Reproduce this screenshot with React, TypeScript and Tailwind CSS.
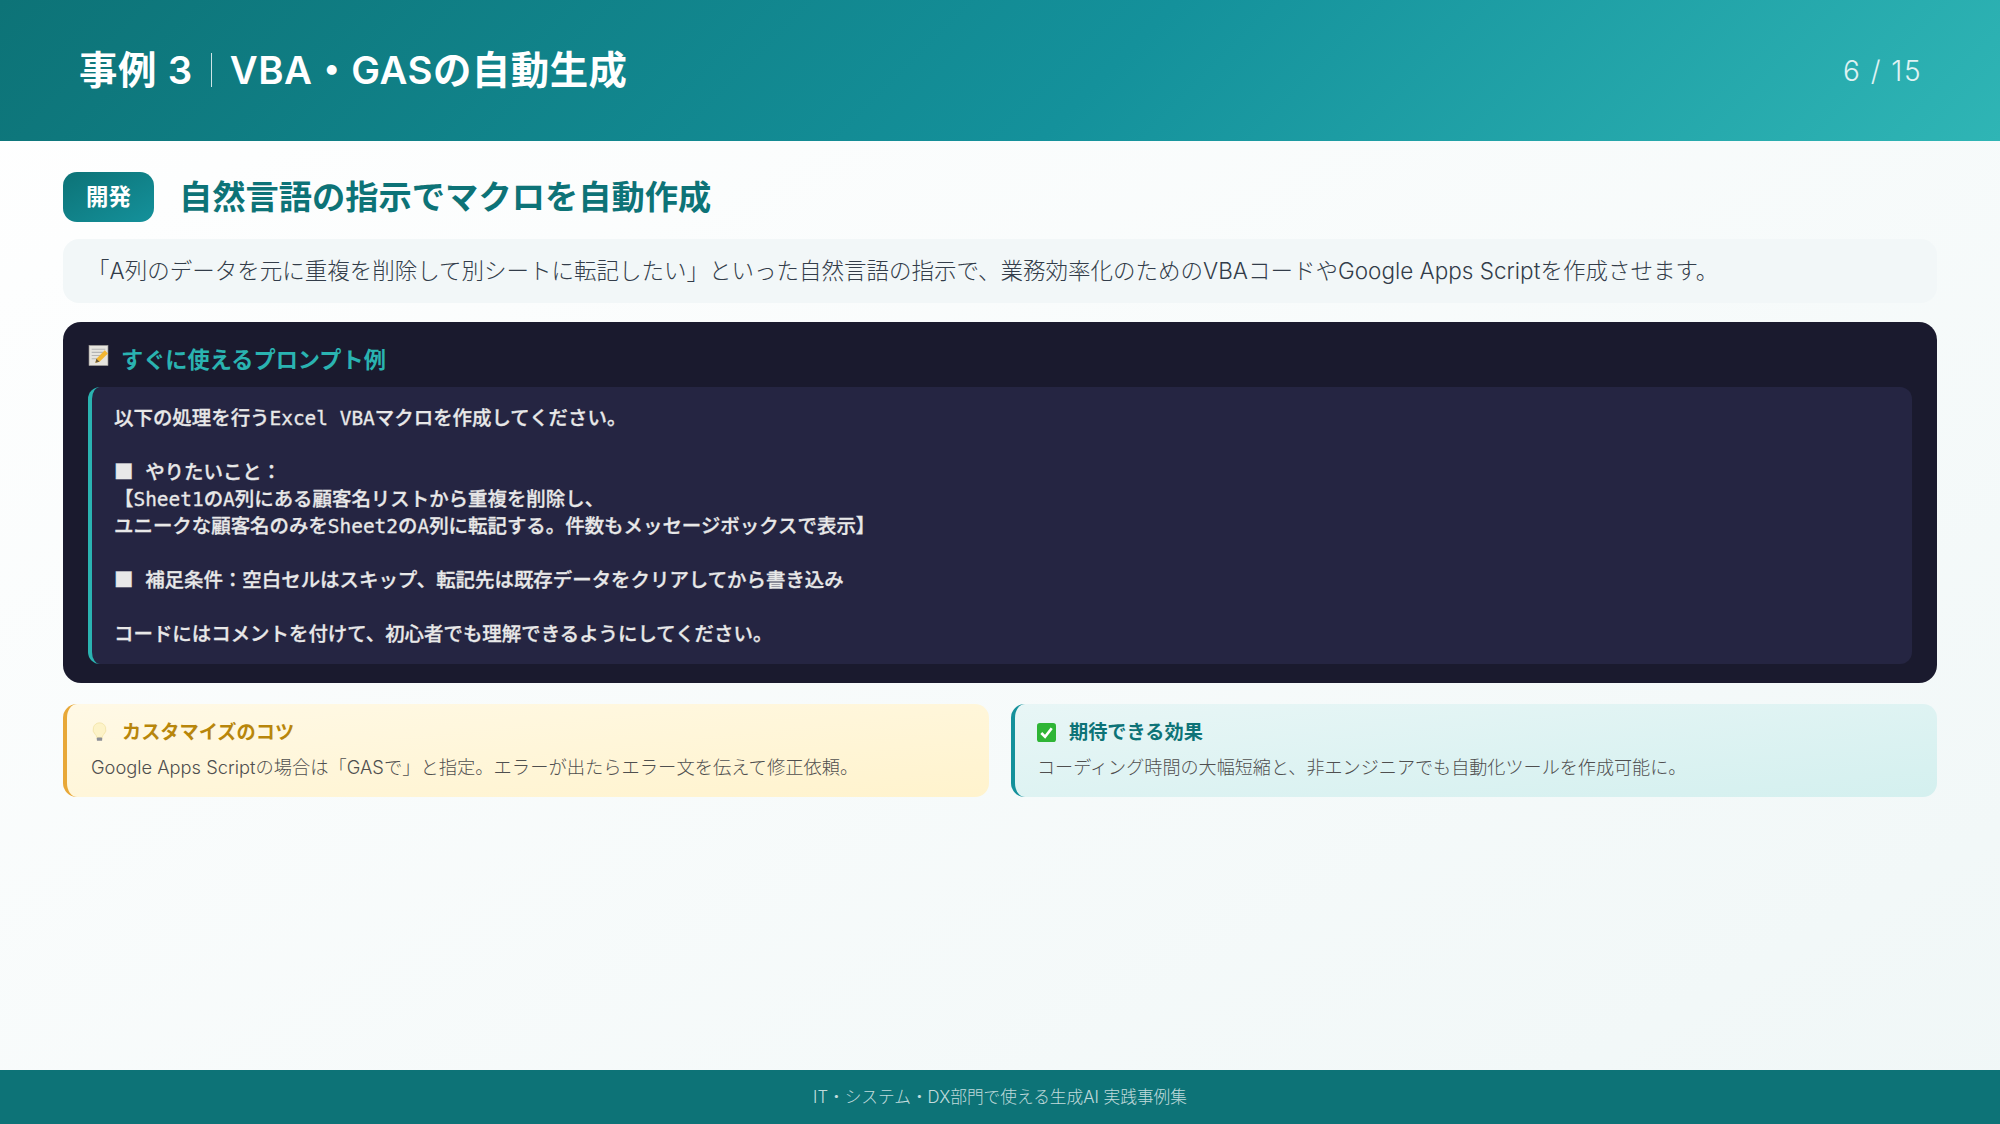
const sans = "font-['Inter','Noto_Sans_CJK_JP',sans-serif]";

function MemoIcon() {
  return (
    <svg viewBox="0 0 20 20" className="h-[21px] w-[21px]">
      <rect x="1" y="0.5" width="18" height="19" fill="#e6e4de" stroke="#a8a6a0" strokeWidth="0.6" />
      <path d="M3.500 4h13M3.500 7h13M3.500 10h9M3.500 13h6" stroke="#b5b5b5" strokeWidth="1" />
      <path d="M7 17l1-4 8-8 3 3-8 8z" fill="#f2b632" />
      <path d="M7 17l1-4 3 3z" fill="#6b5a3a" />
    </svg>
  );
}

function BulbIcon() {
  return (
    <svg viewBox="0 0 20 24" className="h-[20px] w-[17px]">
      <path d="M10 1a8 8 0 0 0-5 14c1.200 1.100 1.500 2.500 1.500 3.500h7c0-1 .3-2.400 1.500-3.500a8 8 0 0 0-5-14z" fill="#fdf3c8" stroke="#efdf9f" strokeWidth="0.8" />
      <rect x="6.800" y="18.500" width="6.400" height="4" rx="1" fill="#8c8f96" />
    </svg>
  );
}

function CheckIcon() {
  return (
    <svg viewBox="0 0 20 20" className="h-[19px] w-[19px]">
      <rect width="20" height="20" rx="3" fill="#2fb536" />
      <path d="M4.500 10.500l4 4 7-9" fill="none" stroke="#fff" strokeWidth="2.800" />
    </svg>
  );
}

function Sq() {
  return <span className="font-['Noto_Sans_CJK_JP',sans-serif] leading-[0]">■</span>;
}

export default function App() {
  return (
    <div className={`flex h-[1124px] w-[2000px] flex-col overflow-hidden bg-gradient-to-br from-[#ffffff] to-[#f0f7f7] ${sans}`}>
      <header className="flex h-[141px] shrink-0 items-center justify-between bg-[linear-gradient(135deg,#0d7377,#14919b_55%,#2fb5b5)] pl-[79px] pr-[78px] text-white">
        <h1 className="flex items-center text-[38.400px] font-semibold tracking-[0.5px]">
          事例<span className="ml-[11px]">3</span>
          <span className="mx-[18px] h-[34px] w-[1px] bg-white/80" />
          VBA・GASの自動生成
        </h1>
        <span className="text-[28px] font-light tracking-[1.500px] text-white/85">6 / 15</span>
      </header>

      <main className="flex min-h-0 flex-1 flex-col px-[63px] pt-[31px]">
        <div className="flex h-[50px] items-center gap-[25px]">
          <span className="flex h-[50px] w-[91px] items-center justify-center rounded-[14px] bg-gradient-to-br from-[#0d7377] to-[#14919b] text-[22.400px] font-semibold text-white">
            開発
          </span>
          <h2 className="pt-[2px] text-[33.280px] font-semibold text-[#0d7377]">自然言語の指示でマクロを自動作成</h2>
        </div>

        <p className="mt-[17px] flex h-[64px] items-center rounded-[16px] bg-[#f2f7f8] pl-[24px] text-[22.500px] font-light text-[#333d4a]">
          「A列のデータを元に重複を削除して別シートに転記したい」といった自然言語の指示で、業務効率化のためのVBAコードやGoogle Apps Scriptを作成させます。
        </p>

        <section className="mt-[19px] flex h-[361px] flex-col rounded-[18px] bg-[#1a1a2e] px-[25px] pb-[19px] pt-[23px]">
          <div className="flex h-[42px] shrink-0 items-start gap-[12px] text-[22.200px] font-semibold text-[#2ab3b1]">
            <MemoIcon />
            <span className="-mt-[2px]">すぐに使えるプロンプト例</span>
          </div>
          <pre className="min-h-0 flex-1 whitespace-pre-wrap rounded-[12px] border-l-4 border-[#2ab3b1] bg-[#252542] pl-[22px] pt-[18px] font-['DejaVu_Sans_Mono','Noto_Sans_CJK_JP',monospace] text-[19.450px] font-medium leading-[27px] text-[#e8e8e8] [-webkit-text-stroke:0.3px_#e8e8e8]">
            以下の処理を行うExcel VBAマクロを作成してください。{"\n\n"}
            <Sq /> やりたいこと：{"\n"}
            【Sheet1のA列にある顧客名リストから重複を削除し、{"\n"}
            ユニークな顧客名のみをSheet2のA列に転記する。件数もメッセージボックスで表示】{"\n\n"}
            <Sq /> 補足条件：空白セルはスキップ、転記先は既存データをクリアしてから書き込み{"\n\n"}
            コードにはコメントを付けて、初心者でも理解できるようにしてください。
          </pre>
        </section>

        <div className="mt-[21px] grid grid-cols-2 gap-[22px]">
          <div className="h-[93px] rounded-[14px] border-l-4 border-[#e8a838] bg-gradient-to-br from-[#fff9e6] to-[#fff3cd] pl-[24px] pt-[14px]">
            <div className="flex items-center gap-[14px] text-[19.200px] font-semibold text-[#b8860b]">
              <BulbIcon />
              カスタマイズのコツ
            </div>
            <p className="mt-[7px] text-[18.300px] font-light text-[#4f4f4f]">
              Google Apps Scriptの場合は「GASで」と指定。エラーが出たらエラー文を伝えて修正依頼。
            </p>
          </div>
          <div className="h-[93px] rounded-[14px] border-l-4 border-[#14919b] bg-gradient-to-br from-[#e8f6f6] to-[#d4f0ef] pl-[22px] pt-[14px]">
            <div className="flex items-center gap-[13px] text-[19.200px] font-semibold text-[#0d7377]">
              <CheckIcon />
              期待できる効果
            </div>
            <p className="mt-[7px] text-[18.100px] font-light text-[#4f4f4f]">
              コーディング時間の大幅短縮と、非エンジニアでも自動化ツールを作成可能に。
            </p>
          </div>
        </div>
      </main>

      <footer className="flex h-[54px] shrink-0 items-center justify-center bg-[#0d7377] pt-[2px] text-[16.700px] font-light text-white/75">
        IT・システム・DX部門で使える生成AI 実践事例集
      </footer>
    </div>
  );
}
